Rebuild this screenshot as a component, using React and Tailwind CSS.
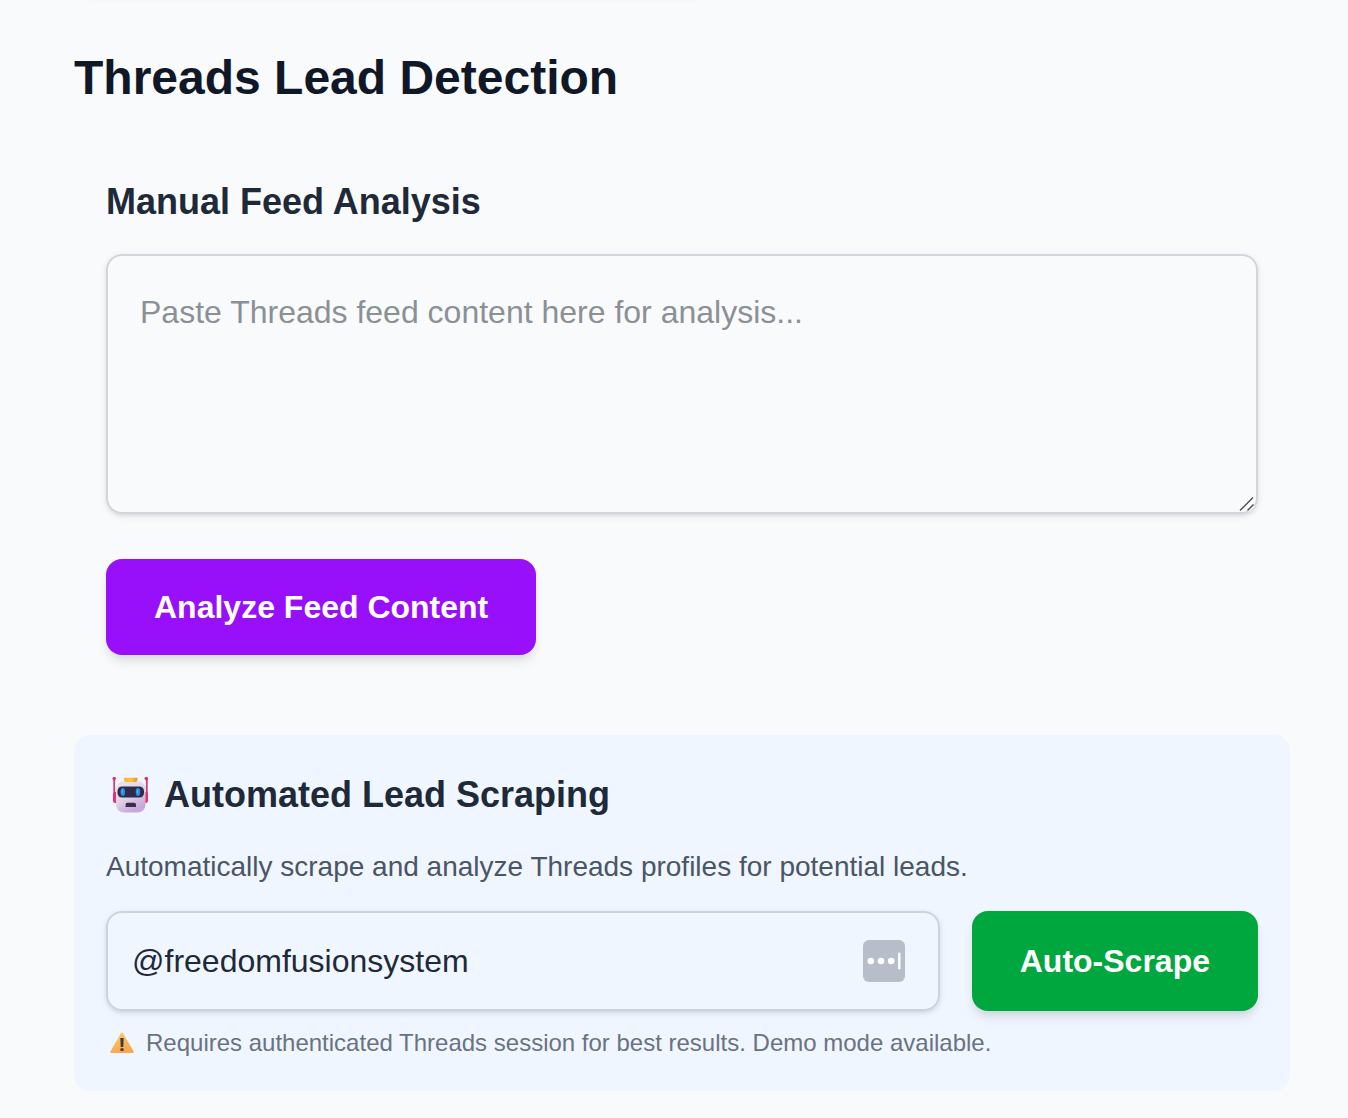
import React from "react";

function RobotIcon() {
  return (
    <svg viewBox="0 0 36 36" className="h-9 w-9 shrink-0" aria-hidden="true">
      <defs>
        <linearGradient id="robot-face" x1="0" y1="0" x2="0.5" y2="1">
          <stop offset="0" stopColor="#e9e6ee" />
          <stop offset="0.55" stopColor="#e0d5e6" />
          <stop offset="1" stopColor="#c8a6dc" />
        </linearGradient>
        <linearGradient id="robot-cap" x1="0" y1="0" x2="1" y2="0">
          <stop offset="0" stopColor="#f5b52e" />
          <stop offset="0.5" stopColor="#fbc53d" />
          <stop offset="1" stopColor="#e79035" />
        </linearGradient>
      </defs>
      <path d="M2.2 1.500v17M34.800 1.500v17" stroke="#d63a70" strokeWidth="1.800" />
      <circle cx="2.200" cy="1.600" r="1.700" fill="#e0295f" />
      <circle cx="34.300" cy="1.600" r="1.700" fill="#e0295f" />
      <path d="M5 15H3.200Q1 15 1 17.500v6Q1 26 3.200 26H5zM32 15h1.800q2.200 0 2.200 2.500v6q0 2.500-2.200 2.500H32z" fill="#ec2d73" />
      <rect x="4" y="4" width="29.500" height="31.500" rx="8" fill="url(#robot-face)" />
      <path d="M12.500 .8h12.500q.8 0 .6 1l-.4 1.600Q24.800 5 23 5h-8.500q-1.800 0-2.200-1.600l-.4-1.600q-.2-1 .6-1z" fill="url(#robot-cap)" />
      <rect x="5.500" y="9.500" width="26.500" height="11" rx="4.500" fill="#302a4c" />
      <ellipse cx="10.800" cy="15" rx="2.300" ry="3.900" fill="#2b8edb" />
      <ellipse cx="26" cy="15" rx="2.300" ry="3.900" fill="#2b8edb" />
      <path d="M10.300 13v3M25.500 13v3" stroke="#5bb5ee" strokeWidth="1" strokeLinecap="round" />
      <path d="M15.300 25.800h7q1.700 0 1.700 2v2.200H13.600v-2.200q0-2 1.700-2z" fill="#392f48" />
    </svg>
  );
}

function WarningIcon() {
  return (
    <svg viewBox="0 0 24 22" className="h-[22px] w-6 shrink-0" aria-hidden="true">
      <defs>
        <linearGradient id="warning-fill" x1="0" y1="0" x2="0.4" y2="1">
          <stop offset="0" stopColor="#f9cf63" />
          <stop offset="1" stopColor="#fba650" />
        </linearGradient>
      </defs>
      <path d="M10.900 1.300q1.100-1.500 2.200 0l10.500 18.300q.6 1.400-.8 1.400H1.200Q-.2 21 .4 19.600z" fill="url(#warning-fill)" />
      <path d="M10.300 6h3.400l-.4 9h-2.600z" fill="#423c42" />
      <rect x="10.400" y="16.300" width="3.200" height="2.700" rx=".7" fill="#423c42" />
    </svg>
  );
}

function FillIcon() {
  return (
    <svg viewBox="0 0 42 42" className="h-[42px] w-[42px]" aria-hidden="true">
      <rect width="42" height="42" rx="6" fill="#b7bdc9" />
      <circle cx="7.800" cy="21" r="3.300" fill="#fff" />
      <circle cx="18" cy="21" r="3.300" fill="#fff" />
      <circle cx="28.200" cy="21" r="3.300" fill="#fff" />
      <path d="M36.300 13.800v14.500" stroke="#fff" strokeWidth="2.500" strokeLinecap="round" />
    </svg>
  );
}

function ResizeGrip() {
  return (
    <svg viewBox="0 0 16 16" className="pointer-events-none absolute right-[3px] bottom-[2px] h-4 w-4" aria-hidden="true">
      <path d="M1 14.500 14 1.500M8.500 14.500 14.500 8.500" stroke="#fff" strokeWidth="4" />
      <path d="M1 14.500 14 1.500M8.500 14.500 14.500 8.500" stroke="#505050" strokeWidth="1.500" />
    </svg>
  );
}

export default function App() {
  return (
    <div className="min-h-screen bg-[#f9fafc] pr-[58px] pb-7 pl-[74px] font-['Liberation_Sans',Arial,sans-serif] text-gray-800">
      <div className="ml-4 h-0.5 w-1/2 bg-[#f7f8fa]" />
      <h1 className="mt-11 mb-8 text-5xl leading-[64px] font-bold text-gray-900">Threads Lead Detection</h1>

      <section className="p-8">
        <h2 className="mb-6 text-4xl leading-[56px] font-bold">
          <label htmlFor="feed">Manual Feed Analysis</label>
        </h2>
        <div className="relative mb-[45px]">
          <textarea
            id="feed"
            placeholder="Paste Threads feed content here for analysis..."
            className="block h-[260px] w-full resize-none rounded-2xl border-2 border-gray-300 bg-transparent p-8 text-[32px] leading-[48px] shadow-[0_2px_6px_rgba(0,0,0,0.1),0_2px_4px_-2px_rgba(0,0,0,0.1)] placeholder:text-[#8b9097]"
          />
          <ResizeGrip />
        </div>
        <button type="button" className="rounded-2xl bg-[#980ffa] px-12 py-6 text-[32px] leading-[48px] font-bold text-white shadow-[0_8px_12px_-2px_rgba(0,0,0,0.1),0_4px_8px_-4px_rgba(0,0,0,0.1)]">
          Analyze Feed Content
        </button>
      </section>

      <section className="mt-12 rounded-2xl bg-[#eff6ff] p-8">
        <h2 className="mb-6 flex items-center gap-4 pl-1.5 text-4xl leading-[56px] font-bold">
          <RobotIcon />
          Automated Lead Scraping
        </h2>
        <p className="mb-6 text-[28px] leading-10 text-gray-600">
          Automatically scrape and analyze Threads profiles for potential leads.
        </p>
        <div className="flex gap-8">
          <div className="relative min-w-0 flex-1">
            <input
              type="text"
              aria-label="Threads profile"
              defaultValue="@freedomfusionsystem"
              className="block h-[100px] w-full rounded-2xl border-2 border-[#cdd3de] bg-transparent pr-24 pl-6 text-[32px] leading-[48px] shadow-[0_2px_6px_rgba(0,0,0,0.1),0_2px_4px_-2px_rgba(0,0,0,0.1)]"
            />
            <button type="button" aria-label="Fill profile" className="absolute inset-y-0 right-[35px] my-auto h-[42px]">
              <FillIcon />
            </button>
          </div>
          <button type="button" className="rounded-2xl bg-[#00a73e] px-12 text-[32px] leading-[48px] font-bold text-white shadow-[0_8px_12px_-2px_rgba(0,0,0,0.1),0_4px_8px_-4px_rgba(0,0,0,0.1)]">
            Auto-Scrape
          </button>
        </div>
        <p className="mt-4 flex items-center gap-3 pl-1 text-2xl leading-8 text-gray-500">
          <WarningIcon />
          Requires authenticated Threads session for best results. Demo mode available.
        </p>
      </section>
    </div>
  );
}
